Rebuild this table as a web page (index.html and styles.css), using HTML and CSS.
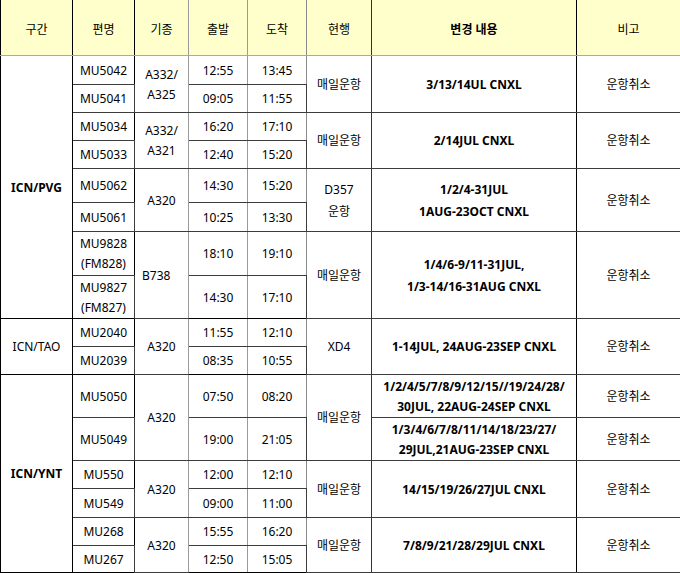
FILE: index.html
```html
<!DOCTYPE html>
<html lang="ko">
<head>
<meta charset="utf-8">
<title>운항 변경</title>
<link rel="stylesheet" href="styles.css">
</head>
<body>
<table class="schedule">
  <colgroup>
    <col class="w-sector"><col class="w-flight"><col class="w-type"><col class="w-dep"><col class="w-arr"><col class="w-cur"><col class="w-chg"><col class="w-note">
  </colgroup>
  <thead>
    <tr class="head">
      <th class="sector">구간</th>
      <th class="flight">편명</th>
      <th class="type">기종</th>
      <th class="dep">출발</th>
      <th class="arr">도착</th>
      <th class="cur">현행</th>
      <th class="chg">변경 내용</th>
      <th class="note">비고</th>
    </tr>
  </thead>
  <tbody>
    <tr class="r29">
      <td class="sector bold" rowspan="8">ICN/PVG</td>
      <td class="flight">MU5042</td>
      <td class="type" rowspan="2">A332/<br>A325</td>
      <td class="dep">12:55</td>
      <td class="arr">13:45</td>
      <td class="cur" rowspan="2">매일운항</td>
      <td class="chg" rowspan="2">3/13/14UL CNXL</td>
      <td class="note" rowspan="2">운항취소</td>
    </tr>
    <tr class="r28">
      <td class="flight">MU5041</td>
      <td class="dep">09:05</td>
      <td class="arr">11:55</td>
    </tr>
    <tr class="r28">
      <td class="flight">MU5034</td>
      <td class="type" rowspan="2">A332/<br>A321</td>
      <td class="dep">16:20</td>
      <td class="arr">17:10</td>
      <td class="cur" rowspan="2">매일운항</td>
      <td class="chg" rowspan="2">2/14JUL CNXL</td>
      <td class="note" rowspan="2">운항취소</td>
    </tr>
    <tr class="r28">
      <td class="flight">MU5033</td>
      <td class="dep">12:40</td>
      <td class="arr">15:20</td>
    </tr>
    <tr class="r34">
      <td class="flight">MU5062</td>
      <td class="type" rowspan="2">A320</td>
      <td class="dep">14:30</td>
      <td class="arr">15:20</td>
      <td class="cur tall" rowspan="2">D357<br>운항</td>
      <td class="chg tall" rowspan="2">1/2/4-31JUL<br>1AUG-23OCT CNXL</td>
      <td class="note" rowspan="2">운항취소</td>
    </tr>
    <tr class="r29">
      <td class="flight">MU5061</td>
      <td class="dep">10:25</td>
      <td class="arr">13:30</td>
    </tr>
    <tr class="r44">
      <td class="flight">MU9828<br>(FM828)</td>
      <td class="type left" rowspan="2">B738</td>
      <td class="dep">18:10</td>
      <td class="arr">19:10</td>
      <td class="cur" rowspan="2">매일운항</td>
      <td class="chg tall" rowspan="2">1/4/6-9/11-31JUL,<br>1/3-14/16-31AUG CNXL</td>
      <td class="note" rowspan="2">운항취소</td>
    </tr>
    <tr class="r43 group-end">
      <td class="flight">MU9827<br>(FM827)</td>
      <td class="dep">14:30</td>
      <td class="arr">17:10</td>
    </tr>
    <tr class="r28">
      <td class="sector" rowspan="2">ICN/TAO</td>
      <td class="flight">MU2040</td>
      <td class="type" rowspan="2">A320</td>
      <td class="dep">11:55</td>
      <td class="arr">12:10</td>
      <td class="cur" rowspan="2">XD4</td>
      <td class="chg" rowspan="2">1-14JUL, 24AUG-23SEP CNXL</td>
      <td class="note" rowspan="2">운항취소</td>
    </tr>
    <tr class="r28 group-end">
      <td class="flight">MU2039</td>
      <td class="dep">08:35</td>
      <td class="arr">10:55</td>
    </tr>
    <tr class="r43">
      <td class="sector bold" rowspan="6">ICN/YNT</td>
      <td class="flight">MU5050</td>
      <td class="type" rowspan="2">A320</td>
      <td class="dep">07:50</td>
      <td class="arr">08:20</td>
      <td class="cur" rowspan="2">매일운항</td>
      <td class="chg">1/2/4/5/7/8/9/12/15//19/24/28/<br>30JUL, 22AUG-24SEP CNXL</td>
      <td class="note">운항취소</td>
    </tr>
    <tr class="r43">
      <td class="flight">MU5049</td>
      <td class="dep">19:00</td>
      <td class="arr">21:05</td>
      <td class="chg">1/3/4/6/7/8/11/14/18/23/27/<br>29JUL,21AUG-23SEP CNXL</td>
      <td class="note">운항취소</td>
    </tr>
    <tr class="r28">
      <td class="flight">MU550</td>
      <td class="type" rowspan="2">A320</td>
      <td class="dep">12:00</td>
      <td class="arr">12:10</td>
      <td class="cur" rowspan="2">매일운항</td>
      <td class="chg" rowspan="2">14/15/19/26/27JUL CNXL</td>
      <td class="note" rowspan="2">운항취소</td>
    </tr>
    <tr class="r29">
      <td class="flight">MU549</td>
      <td class="dep">09:00</td>
      <td class="arr">11:00</td>
    </tr>
    <tr class="r28">
      <td class="flight">MU268</td>
      <td class="type" rowspan="2">A320</td>
      <td class="dep">15:55</td>
      <td class="arr">16:20</td>
      <td class="cur" rowspan="2">매일운항</td>
      <td class="chg" rowspan="2">7/8/9/21/28/29JUL CNXL</td>
      <td class="note" rowspan="2">운항취소</td>
    </tr>
    <tr class="r27">
      <td class="flight">MU267</td>
      <td class="dep">12:50</td>
      <td class="arr">15:05</td>
    </tr>
  </tbody>
</table>
</body>
</html>
```

FILE: styles.css
```css
html, body {
  margin: 0;
  padding: 0;
  background: #ffffff;
}

.schedule {
  border-collapse: collapse;
  table-layout: fixed;
  width: 680px;
  font-family: "Noto Sans", "Noto Sans CJK KR", sans-serif;
  font-size: 12px;
  line-height: 20px;
  color: #000000;
}

.w-sector { width: 72px; }
.w-flight { width: 62px; }
.w-type { width: 54px; }
.w-dep { width: 59px; }
.w-arr { width: 59px; }
.w-cur { width: 65px; }
.w-chg { width: 205px; }
.w-note { width: 104px; }

.schedule th,
.schedule td {
  padding: 2px 0 0 0;
  text-align: center;
  vertical-align: middle;
  border: 1px solid #3c3c3c;
  font-weight: normal;
  white-space: nowrap;
  overflow: hidden;
}

.schedule th {
  padding-top: 5px;
  background: #ffffcc;
  border-top: none;
  border-bottom-color: #a8a8a8;
}

.head { height: 55px; }
.r27 { height: 27px; }
.r28 { height: 28px; }
.r29 { height: 29px; }
.r34 { height: 34px; }
.r43 { height: 43px; }
.r44 { height: 44px; }

.schedule .sector { border-left-color: #000000; border-right-color: #000000; }
.schedule .flight { border-right-color: #000000; }
.schedule .type { border-right-color: #9a9a9a; }
.schedule .dep { border-right-color: #9a9a9a; }
.schedule .arr { border-right-color: #8a8a8a; }
.schedule .cur { border-right-color: #333333; }
.schedule .chg { border-right-color: #000000; }
.schedule .note { border-right-color: #000000; }

.schedule td.sector,
.group-end td { border-bottom-color: #000000; }
.schedule tbody tr:last-child td { border-bottom-color: #000000; }

.schedule .chg,
.schedule .bold { font-weight: bold; }

.schedule .tall { line-height: 22px; }

.schedule .left {
  text-align: left;
  padding-left: 7px;
}
```
